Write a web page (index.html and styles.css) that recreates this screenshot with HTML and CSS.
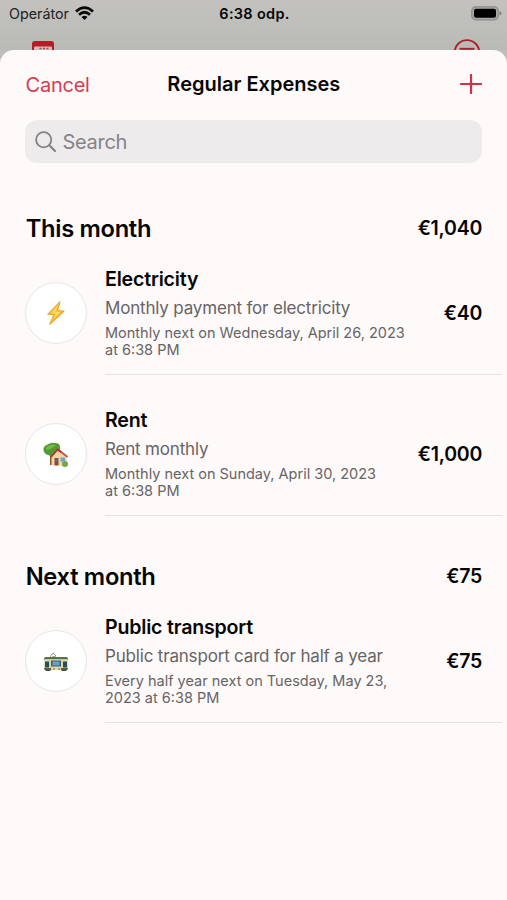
FILE: index.html
```html
<!DOCTYPE html>
<html lang="en">
<head>
<meta charset="utf-8">
<meta name="viewport" content="width=device-width, initial-scale=1">
<title>Regular Expenses</title>
<link rel="stylesheet" href="styles.css">
</head>
<body>
<div class="backdrop">
  <div class="status">
    <div class="carrier"><span>Operátor</span>
      <svg width="19" height="15" viewBox="0 0 19 15"><g fill="none" stroke="#080808" stroke-width="2.7"><path d="M1 5.5Q9.500-2.300 18 5.500"/><path d="M4 8.700Q9.500 3.800 15 8.700"/></g><path d="M6.500 11Q9.500 8.500 12.500 11L9.500 14Z" fill="#080808"/></svg>
    </div>
    <span class="clock">6:38 odp.</span>
    <svg class="battery" width="31" height="15" viewBox="0 0 31 15"><rect x=".8" y=".8" width="26.400" height="13" rx="4" fill="#a9a9a5" stroke="#8c8c89" stroke-width="1.300"/><rect x="3" y="2.800" width="22" height="9" rx="2" fill="#000"/><path d="M28.500 5q2 1 2 2.300t-2 2.300z" fill="#7d7d7a"/></svg>
  </div>
  <div class="peek">
    <svg width="22" height="9" viewBox="0 0 22 9"><path d="M0 9V3Q0 0 3 0H19Q22 0 22 3V9Z" fill="#b51c25"/><path d="M2 9V6.500Q2 5.500 3 5.500H19Q20 5.500 20 6.500V9Z" fill="#d0bebc"/><path d="M7.500 7.500h2m1.500 0h2m1.500 0h2" stroke="#a5484c" stroke-width="1.300"/></svg>
    <svg width="28" height="11" viewBox="0 0 28 11"><circle cx="14" cy="13.500" r="12.400" fill="none" stroke="#a5242c" stroke-width="1.900"/><path d="M6.500 9.800H21.500" stroke="#a5242c" stroke-width="1.900"/></svg>
  </div>
</div>
<main class="sheet">
  <header class="nav">
    <span class="cancel">Cancel</span>
    <h1>Regular Expenses</h1>
    <svg width="22" height="20" viewBox="0 0 22 20"><path d="M11 .7V19.300M.8 10H21.200" stroke="#d62f45" stroke-width="2.200" stroke-linecap="round"/></svg>
  </header>
  <div class="search">
    <svg width="22" height="22" viewBox="0 0 22 22"><g fill="none" stroke="#858386" stroke-width="1.800" stroke-linecap="round"><circle cx="8.700" cy="8.700" r="7.600"/><path d="M14.300 14.300L20 20" stroke-width="2.200"/></g></svg>
    <span>Search</span>
  </div>

  <section>
    <div class="head"><h2>This month</h2><span class="amount">€1,040</span></div>
    <article class="item">
      <div class="icon"><svg width="18" height="24" viewBox="0 0 18 24"><path d="M13 .8L.8 13.300 7 13.700 2.800 23.300 17 10 10.500 9.500Z" fill="#f8c83f" stroke="#eda22e" stroke-width="1.100" stroke-linejoin="round"/><path d="M10.500 5L5 11.500 9.500 12 7 17 12.500 11.300 7.800 11Z" fill="#ffe36a"/></svg></div>
      <div class="body">
        <div><h3>Electricity</h3><p class="sub">Monthly payment for electricity</p><p class="when">Monthly next on Wednesday, April 26, 2023<br>at 6:38 PM</p></div>
        <span class="amount">€40</span>
      </div>
    </article>
    <article class="item">
      <div class="icon"><svg class="house" width="26" height="26" viewBox="0 0 26 26"><path d="M7 11h3v12H7z" fill="#805730"/><path d="M.5 8Q0 4 4.500 2.500Q8 0 12 1Q17 1 17 5Q18 10 14 12Q10 15.500 5 13Q1 12 .5 8Z" fill="#549b35"/><path d="M3 6Q6 2 13 3Q9 7 4 8Z" fill="#75b84c"/><path d="M8.500 14L15 7.500 23.500 14V24L8.500 23Z" fill="#f2d6a5"/><path d="M15 7.500L24.500 15" stroke="#cf4b45" stroke-width="1.800"/><path d="M8 15L14.500 7.500 18 10" fill="none" stroke="#b82f35" stroke-width="1.800"/><path d="M11.500 16h4v7.500h-4z" fill="#8c4937"/><path d="M12.500 17h2v2.500h-2z" fill="#58758b"/><path d="M17.500 15.500h4.500v4h-4.500z" fill="#69a4cd"/><circle cx="22" cy="22" r="3" fill="#70a744"/></svg></div>
      <div class="body">
        <div><h3>Rent</h3><p class="sub">Rent monthly</p><p class="when">Monthly next on Sunday, April 30, 2023<br>at 6:38 PM</p></div>
        <span class="amount">€1,000</span>
      </div>
    </article>
  </section>

  <section>
    <div class="head"><h2>Next month</h2><span class="amount">€75</span></div>
    <article class="item">
      <div class="icon"><svg class="tram" width="26" height="20" viewBox="0 0 26 20"><path d="M7 5L10 1 13 4 9 5" fill="none" stroke="#88928a" stroke-width=".9"/><path d="M2 5H24L25.500 7.500H.5Z" fill="#557346"/><path d="M1.500 7.500H24.500L25 18H1Z" fill="#e0d5a5"/><path d="M2 9.500h4v6H2zm18 0h4v6h-4z" fill="#284d60"/><path d="M8 8.500h10v6H8z" fill="#3b637d"/><path d="M9.500 9.500h7v4h-7z" fill="#6d9fc0"/><path d="M1 16H8V18.500H2ZM18 16H25L24 18.500H18Z" fill="#526345"/><path d="M3 18.500h4m12 0h4" stroke="#414841" stroke-width="1.200"/><path d="M10 17h2m3 0h2" stroke="#a5574a"/></svg></div>
      <div class="body">
        <div><h3>Public transport</h3><p class="sub">Public transport card for half a year</p><p class="when">Every half year next on Tuesday, May 23,<br>2023 at 6:38 PM</p></div>
        <span class="amount">€75</span>
      </div>
    </article>
  </section>
</main>
</body>
</html>
```
FILE: styles.css
```css
* { box-sizing: border-box; }
body { margin: 0; height: 900px; overflow: hidden; display: flex; flex-direction: column; background: #bdbeb9; color: #050505; font-family: Inter, "Liberation Sans", sans-serif; }
h1, h2, h3, p { margin: 0; font-weight: 600; }
svg { display: block; flex: none; }
.backdrop { height: 50px; flex: none; background: linear-gradient(#c3c2bf, #b9bab5); }
.status { height: 27px; padding: 0 5px 0 9px; display: grid; grid-template-columns: 1fr auto 1fr; align-items: center; }
.carrier { display: flex; align-items: center; gap: 6px; font-size: 14.3px; color: #222; }
.carrier svg { margin-bottom: 1px; }
.clock { margin-left: -2px; font-size: 14.5px; font-weight: 600; letter-spacing: .3px; }
.battery { justify-self: end; }
.peek { height: 23px; padding: 0 26px 0 31.5px; display: flex; justify-content: space-between; align-items: flex-end; }
.sheet { flex: 1; background: #fefafa; border-radius: 14px 14px 0 0; }
.nav { height: 70px; padding: 0 25px 2px 25.6px; display: grid; grid-template-columns: 1fr auto 1fr; align-items: center; }
.nav svg { justify-self: end; }
.cancel { padding-top: 1px; color: #d93a50; font-size: 20px; letter-spacing: -.25px; }
h1 { font-size: 20px; }
.search { height: 43px; margin: 0 25px; padding: 0 10px; display: flex; align-items: center; gap: 5.5px; border-radius: 12px; background: #eeebec; color: #858386; font-size: 20px; letter-spacing: -.3px; }
.head { height: 40px; margin-top: 45px; padding: 0 25px 0 25.7px; display: flex; justify-content: space-between; align-items: center; }
section + section .head { margin-top: 40px; }
h2 { font-size: 23.7px; letter-spacing: -.3px; }
.amount { font-size: 19.5px; font-weight: 600; letter-spacing: -.25px; }
.item { display: grid; grid-template-columns: 62px 1fr; gap: 18px; padding: 0 5px 0 25px; margin-top: 33px; }
.head + .item { margin-top: 19px; }
.icon { width: 62px; height: 62px; margin-top: 15px; display: grid; place-items: center; border: 1.5px solid #e7e5e6; border-radius: 50%; background: #fff; }
.house, .tram { margin-top: 2px; }
.body { height: 108px; padding-right: 20px; display: flex; justify-content: space-between; border-bottom: 1px solid #e4e1e2; }
.body .amount { line-height: 24px; margin-top: 34px; }
h3 { font-size: 19.6px; line-height: 24px; letter-spacing: -.2px; }
.sub { margin-top: 7px; font-size: 17px; line-height: 21px; font-weight: 400; letter-spacing: -.18px; color: #666466; }
.when { margin-top: 5px; font-size: 14.5px; line-height: 17.3px; font-weight: 400; color: #666466; white-space: nowrap; }
```
